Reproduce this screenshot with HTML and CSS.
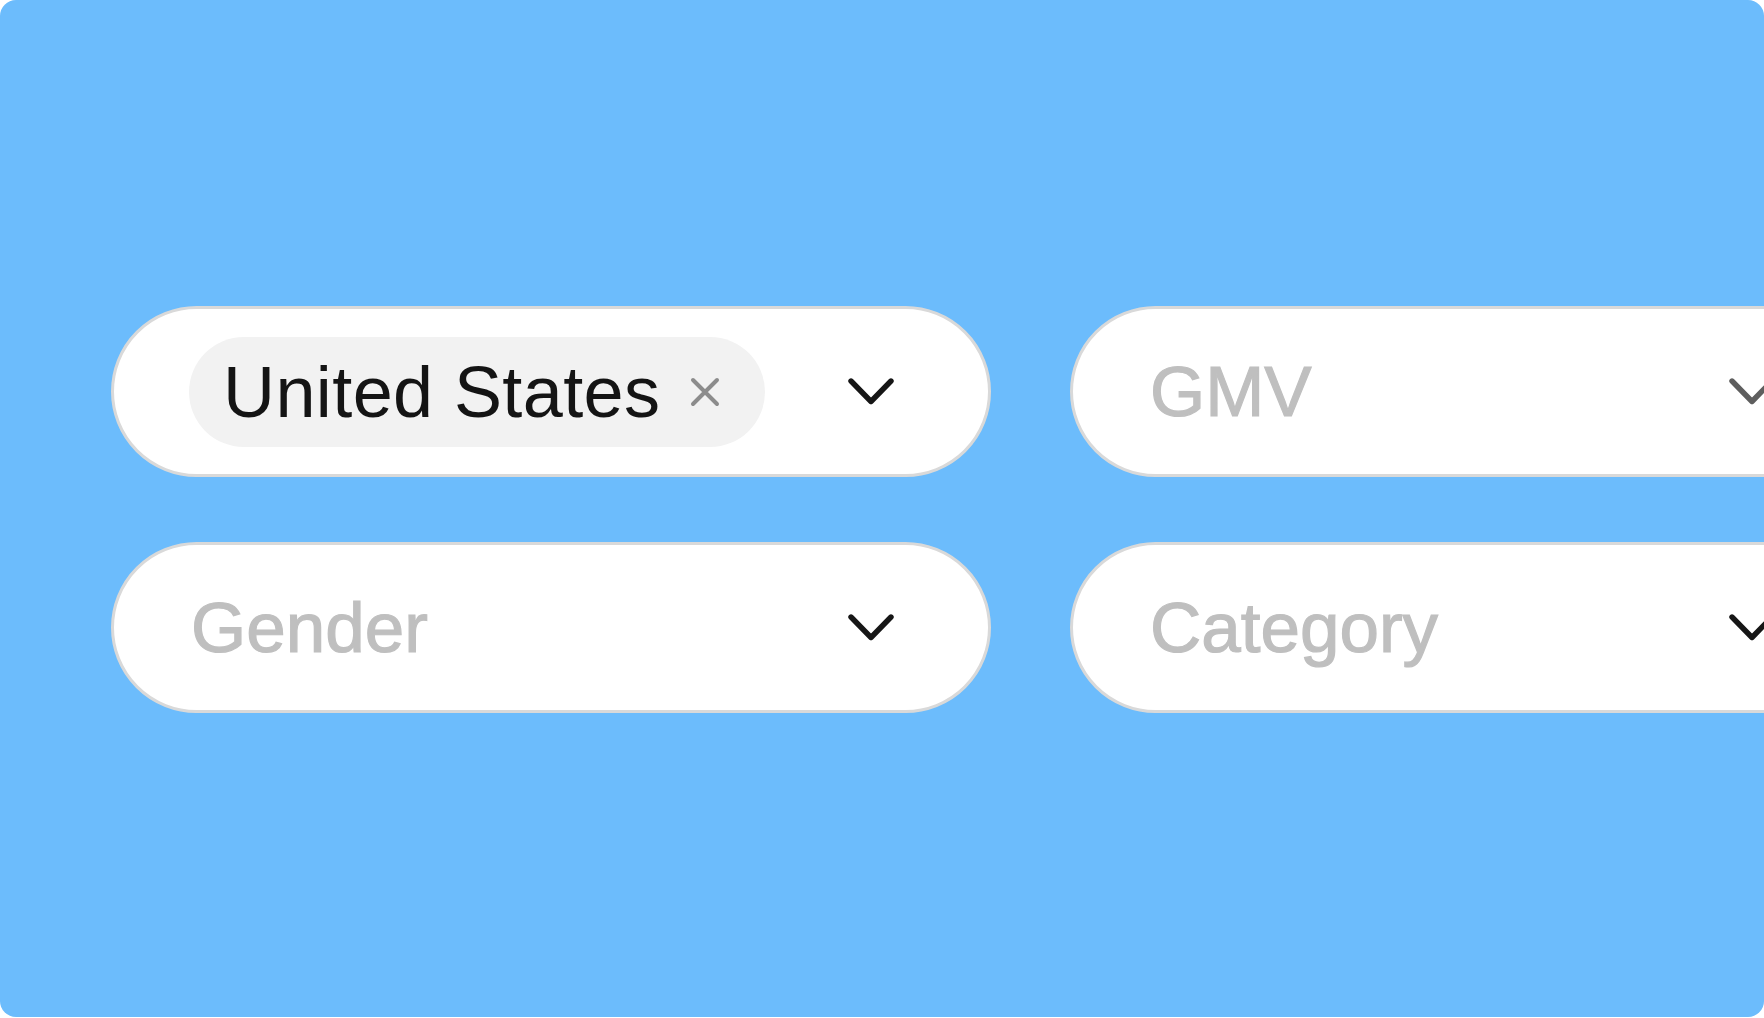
FILE: index.html
```html
<!DOCTYPE html>
<html lang="en">
<head>
    <meta charset="UTF-8">
    <meta name="viewport" content="width=device-width, initial-scale=1.0">
    <title>Filters</title>
    <link rel="stylesheet" href="styles.css">
</head>
<body>
    <div class="canvas">
        <div class="filters">
            <div class="select">
                <div class="chip">
                    <span class="chip-label">United States</span>
                    <svg class="chip-remove" width="30" height="30" viewBox="0 0 30 30">
                        <path d="M3 3 L27 27 M27 3 L3 27" fill="none" stroke="#8c8c8c" stroke-width="4" stroke-linecap="round"/>
                    </svg>
                </div>
                <svg class="chevron" width="46" height="27" viewBox="0 0 46 27">
                    <path d="M3 3 L23 23.5 L43 3" fill="none" stroke="#161616" stroke-width="5.4" stroke-linecap="round" stroke-linejoin="round"/>
                </svg>
            </div>

            <div class="select select-wide">
                <span class="placeholder">GMV</span>
                <svg class="chevron" width="46" height="27" viewBox="0 0 46 27">
                    <path d="M3 3 L23 23.5 L43 3" fill="none" stroke="#5e5e5e" stroke-width="5.4" stroke-linecap="round" stroke-linejoin="round"/>
                </svg>
            </div>

            <div class="select">
                <span class="placeholder">Gender</span>
                <svg class="chevron" width="46" height="27" viewBox="0 0 46 27">
                    <path d="M3 3 L23 23.5 L43 3" fill="none" stroke="#161616" stroke-width="5.4" stroke-linecap="round" stroke-linejoin="round"/>
                </svg>
            </div>

            <div class="select select-wide">
                <span class="placeholder">Category</span>
                <svg class="chevron" width="46" height="27" viewBox="0 0 46 27">
                    <path d="M3 3 L23 23.5 L43 3" fill="none" stroke="#161616" stroke-width="5.4" stroke-linecap="round" stroke-linejoin="round"/>
                </svg>
            </div>
        </div>
    </div>
</body>
</html>
```

FILE: styles.css
```css
body {
    margin: 0;
    background: #ffffff;
    font-family: "Liberation Sans", Arial, sans-serif;
}
.canvas {
    height: 1017px;
    background: #6cbcfc;
    border-radius: 16px;
    overflow: hidden;
}
.filters {
    display: grid;
    grid-template-columns: 880px 802px;
    column-gap: 79px;
    row-gap: 65px;
    padding: 306px 0 0 111px;
}
.select {
    box-sizing: border-box;
    height: 171px;
    display: flex;
    align-items: center;
    justify-content: space-between;
    padding: 0 94px 0 77px;
    background: #ffffff;
    border: 3px solid #d9d9d9;
    border-radius: 86px;
}
.chip {
    box-sizing: border-box;
    width: 576px;
    height: 110px;
    display: flex;
    align-items: center;
    gap: 30px;
    padding-left: 34px;
    margin-left: -2px;
    background: #f2f2f2;
    border-radius: 55px;
}
.chip-label {
    font-size: 72px;
    font-weight: 400;
    color: #141414;
    letter-spacing: 0.4px;
}
.chip-remove {
    flex-shrink: 0;
}
.placeholder {
    font-size: 71px;
    font-weight: 400;
    color: #bfbfbf;
    -webkit-text-stroke: 1.2px #bfbfbf;
}
.chevron {
    flex-shrink: 0;
}
```
